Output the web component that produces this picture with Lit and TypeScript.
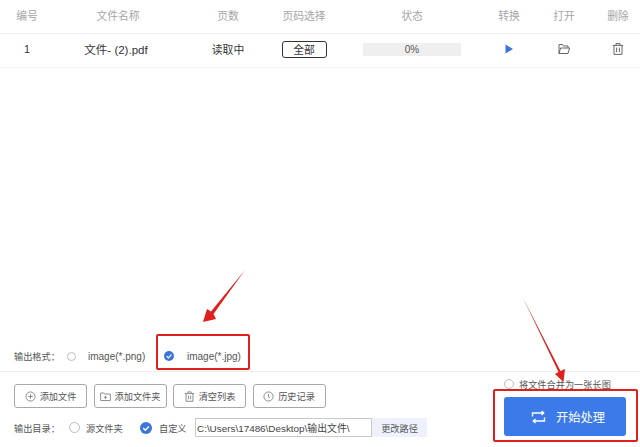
import { LitElement, html, css, svg } from "lit";
import { customElement, state } from "lit/decorators.js";

const HEADERS = ["编号", "文件名称", "页数", "页码选择", "状态", "转换", "打开", "删除"];

const plusIcon = html`<svg class="ico" viewBox="0 0 12 12"><circle cx="6" cy="6" r="5"></circle><path d="M6 3.500v5M3.500 6h5"></path></svg>`;
const folderPlusIcon = html`<svg class="ico" viewBox="0 0 12 12"><path d="M.7 2.200h3.600l1 1.200h6v7H.7z"></path><path d="M6 5.200v3.400M4.300 6.900h3.400"></path></svg>`;
const trashIcon = html`<svg class="ico" viewBox="0 0 12 12"><path d="M1 2.800h10M4.200 2.600V1h3.600v1.600M2.200 2.800v8.400h7.600V2.800M4.800 5v4M7.200 5v4"></path></svg>`;
const clockIcon = html`<svg class="ico" viewBox="0 0 12 12"><circle cx="6" cy="6" r="5"></circle><path d="M6 3v3.400l1.800 1.200"></path></svg>`;

const BUTTONS = [
  { label: "添加文件", icon: plusIcon },
  { label: "添加文件夹", icon: folderPlusIcon },
  { label: "清空列表", icon: trashIcon },
  { label: "历史记录", icon: clockIcon },
];

@customElement("app-root")
export class AppRoot extends LitElement {
  static styles = css`
    :host {
      display: block;
      position: relative;
      width: 640px;
      height: 447px;
      overflow: hidden;
      background: #fff;
      color: #444;
      font-family: "Liberation Sans", "Noto Sans CJK SC", sans-serif;
      font-size: 10px;
    }
    .page {
      display: flex;
      flex-direction: column;
      height: 100%;
    }
    .grid {
      display: grid;
      grid-template-columns: 54px 128px 92px 60px 156px 38px 72px 36px;
      align-items: center;
      justify-items: center;
      box-sizing: border-box;
      padding-bottom: 3px;
      border-bottom: 1px solid #f0f0f0;
    }
    .head {
      height: 34px;
      color: #a6a6a6;
      font-size: 10.8px;
    }
    .row {
      height: 34px;
      color: #333;
      font-size: 10.8px;
    }
    .name {
      font-size: 11.5px;
      padding-right: 4px;
    }
    .all {
      width: 45px;
      height: 17px;
      box-sizing: border-box;
      border: 1px solid #333;
      border-radius: 3px;
      display: flex;
      align-items: center;
      justify-content: center;
    }
    .progress {
      width: 98px;
      height: 13px;
      background: #efefef;
      display: flex;
      align-items: center;
      justify-content: center;
      font-size: 10px;
      color: #555;
    }
    .cell-icon { width: 14px; height: 14px; display: block; }
    .stroke { fill: none; stroke: #666; stroke-width: 1; }
    .spacer { flex: 1; }
    .format {
      display: flex;
      align-items: center;
      box-sizing: border-box;
      height: 37px;
      padding: 6px 0 0 14px;
      border-bottom: 1px solid #eeeeee;
      color: #555;
    }
    .format .label { width: 53px; font-size: 9.2px; }
    .format .opt { display: flex; align-items: center; }
    .format .png { width: 84px; gap: 12px; }
    .format .jpg { gap: 13px; margin-left: 13px; }
    .radio {
      width: 9px;
      height: 9px;
      flex: none;
      box-sizing: border-box;
      border: 1px solid #bdbdbd;
      border-radius: 50%;
    }
    .radio.on {
      border: none;
      width: 10px;
      height: 10px;
    }
    .radio.on svg { display: block; width: 10px; height: 10px; }
    .bottom {
      flex: none;
      height: 75px;
      display: flex;
    }
    .left {
      padding: 12px 0 0 14px;
      display: flex;
      flex-direction: column;
      gap: 10px;
    }
    .buttons { display: flex; gap: 6.500px; }
    .btn {
      width: 73px;
      height: 24px;
      box-sizing: border-box;
      border: 1px solid #a8a8a8;
      border-radius: 3px;
      display: flex;
      align-items: center;
      justify-content: center;
      gap: 4px;
      color: #555;
      font-size: 9.2px;
      white-space: nowrap;
    }
    .ico {
      width: 11px;
      height: 11px;
      flex: none;
      fill: none;
      stroke: #777;
      stroke-width: 0.9;
    }
    .dir {
      display: flex;
      align-items: center;
      height: 19px;
      color: #555;
      font-size: 9.2px;
    }
    .dir .label { width: 55px; }
    .dir .radio { width: 11px; height: 11px; margin-right: 6px; }
    .dir .src { width: 54px; }
    .dir .custom { width: 36px; }
    .dir .radio.on { width: 12px; height: 12px; margin-right: 7px; }
    .dir .radio.on svg { width: 12px; height: 12px; }
    .path {
      width: 177px;
      height: 19px;
      box-sizing: border-box;
      border: 1px solid #c9c9c9;
      display: flex;
      align-items: center;
      padding-left: 1px;
      font-size: 9.9px;
      color: #444;
      white-space: nowrap;
      overflow: hidden;
    }
    .change {
      width: 55px;
      height: 19px;
      background: #eef1fb;
      display: flex;
      align-items: center;
      justify-content: center;
      color: #555;
    }
    .right {
      margin-left: auto;
      width: 136px;
      padding-top: 6px;
      display: flex;
      flex-direction: column;
    }
    .merge {
      display: flex;
      align-items: center;
      gap: 5px;
      height: 12px;
      color: #555;
      font-size: 9.2px;
      white-space: nowrap;
    }
    .merge .radio { width: 10px; height: 10px; }
    .start {
      margin-top: 7px;
      width: 122px;
      height: 39px;
      box-sizing: border-box;
      padding-left: 6px;
      background: #3b7ae8;
      border-radius: 3px;
      display: flex;
      align-items: center;
      justify-content: center;
      gap: 10px;
      color: #fff;
      font-size: 12.3px;
    }
    .start svg {
      width: 15px;
      height: 14px;
      fill: none;
      stroke: #fff;
      stroke-width: 1.4;
    }
    .overlay {
      position: absolute;
      inset: 0;
      width: 640px;
      height: 447px;
      pointer-events: none;
    }
    .mark {
      fill: none;
      stroke: #e0201c;
      stroke-width: 2;
    }
    .arrow { fill: #e0201c; }
  `;

  @state() private files = [{ id: 1, name: "文件- (2).pdf", pages: "读取中", range: "全部", progress: 0 }];

  private checked() {
    return svg`<svg viewBox="0 0 10 10"><circle cx="5" cy="5" r="5" fill="#3b74dc"></circle><path d="M2.700 5.100l1.700 1.700 3-3.100" fill="none" stroke="#fff" stroke-width="1.200"></path></svg>`;
  }

  render() {
    return html`
      <div class="page">
        <div class="grid head">${HEADERS.map((h) => html`<span>${h}</span>`)}</div>
        ${this.files.map(
          (f) => html`
            <div class="grid row">
              <span>${f.id}</span>
              <span class="name">${f.name}</span>
              <span>${f.pages}</span>
              <span class="all">${f.range}</span>
              <span class="progress">${f.progress}%</span>
              <svg class="cell-icon" viewBox="0 0 14 14"><path d="M3.500 2.500L11 7l-7.500 4.500z" fill="#3b74dc"></path></svg>
              <svg class="cell-icon stroke" viewBox="0 0 14 14"><path d="M2 11.500V2.500h3.500l1 1.500h4.500v2M2 11.500h9l1.600-5.500H3.600z"></path></svg>
              <svg class="cell-icon stroke" viewBox="0 0 14 14"><path d="M1.800 3.400h10.400M5 3.200V1.600h4v1.600M3 3.400v9h8v-9M5.600 5.600v4.600M8.400 5.600v4.600"></path></svg>
            </div>
          `
        )}
        <div class="spacer"></div>
        <div class="format">
          <span class="label">输出格式：</span>
          <span class="opt png"><span class="radio"></span><span>image(*.png)</span></span>
          <span class="opt jpg"><span class="radio on">${this.checked()}</span><span>image(*.jpg)</span></span>
        </div>
        <div class="bottom">
          <div class="left">
            <div class="buttons">
              ${BUTTONS.map((b) => html`<div class="btn">${b.icon}<span>${b.label}</span></div>`)}
            </div>
            <div class="dir">
              <span class="label">输出目录：</span>
              <span class="radio"></span>
              <span class="src">源文件夹</span>
              <span class="radio on">${this.checked()}</span>
              <span class="custom">自定义</span>
              <span class="path">C:\\Users\\17486\\Desktop\\输出文件\\</span>
              <span class="change">更改路径</span>
            </div>
          </div>
          <div class="right">
            <div class="merge"><span class="radio"></span><span>将文件合并为一张长图</span></div>
            <div class="start">
              <svg viewBox="0 0 15 14"><path d="M1.500 6.500V3h11M10.500 1l2.200 2-2.200 2M13.500 7.500V11h-11M4.500 13l-2.200-2 2.200-2"></path></svg>
              <span>开始处理</span>
            </div>
          </div>
        </div>
      </div>
      <svg class="overlay" viewBox="0 0 640 447">
        <rect class="mark" x="157" y="335" width="92" height="34" rx="1"></rect>
        <rect class="mark" x="494" y="390" width="143" height="51" rx="1"></rect>
        <path class="arrow" d="M245 270L213.500 314 216 319 203 322 207 309 211 311.500z"></path>
        <path class="arrow" d="M523 298L560.500 371 565 369 563.500 382 555 374 558.500 372z"></path>
      </svg>
    `;
  }
}
